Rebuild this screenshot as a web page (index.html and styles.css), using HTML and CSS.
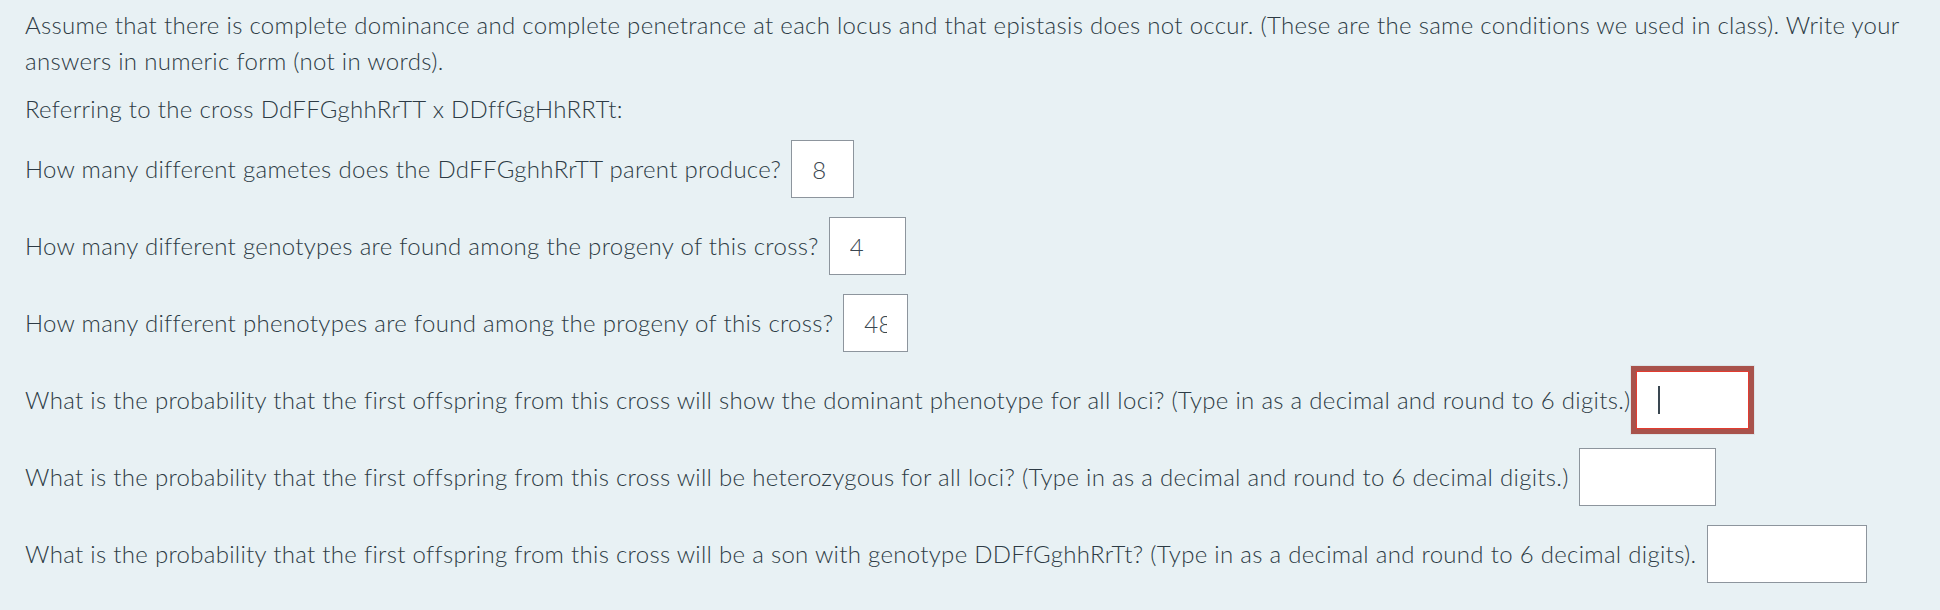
FILE: index.html
```html
<!DOCTYPE html>
<html lang="en">
<head>
<meta charset="utf-8">
<title>Quiz question</title>
<link rel="stylesheet" href="styles.css">
</head>
<body>
<div class="question">
  <p class="intro">Assume that there is complete dominance and complete penetrance at each locus and that epistasis does not occur. (These are the same conditions we used in class). Write your answers in numeric form (not in words).</p>
  <p class="intro">Referring to the cross DdFFGghhRrTT x DDffGgHhRRTt:</p>
  <div class="row"><span class="label">How many different gametes does the DdFFGghhRrTT parent produce?</span><input class="answer w-a" type="text" value="8"></div>
  <div class="row"><span class="label">How many different genotypes are found among the progeny of this cross?</span><input class="answer w-b" type="text" value="4"></div>
  <div class="row"><span class="label">How many different phenotypes are found among the progeny of this cross?</span><input class="answer w-c" type="text" value="48"></div>
  <div class="row"><span class="label">What is the probability that the first offspring from this cross will show the dominant phenotype for all loci? (Type in as a decimal and round to 6 digits.)</span><span class="focus-wrap"><input class="answer w-d focused" type="text" value=""><span class="caret"></span></span></div>
  <div class="row"><span class="label">What is the probability that the first offspring from this cross will be heterozygous for all loci? (Type in as a decimal and round to 6 decimal digits.)</span><input class="answer w-e" type="text" value=""></div>
  <div class="row"><span class="label">What is the probability that the first offspring from this cross will be a son with genotype DDFfGghhRrTt? (Type in as a decimal and round to 6 decimal digits).</span><input class="answer w-f" type="text" value=""></div>
</div>
</body>
</html>
```

FILE: styles.css
```css
html, body {
  margin: 0;
  padding: 0;
  background: #e8f1f4;
}

body {
  font-family: Lato, "Liberation Sans", sans-serif;
  font-weight: 300;
  font-size: 24px;
  line-height: 36px;
  letter-spacing: 0.3px;
  font-variant-ligatures: none;
  color: #2d3b45;
}

.question {
  padding: 7px 15px 0 25px;
}

.intro {
  margin: 0 0 12px 0;
}

.row {
  display: flex;
  align-items: center;
  height: 58px;
  margin-top: 19px;
}

.intro + .row {
  margin-top: 13px;
}

.answer {
  box-sizing: border-box;
  height: 58px;
  margin: 0 0 0 10px;
  padding: 0 20px;
  border: 1px solid #8d959d;
  border-radius: 0;
  background: #ffffff;
  font-family: Lato, "Liberation Sans", sans-serif;
  font-weight: 300;
  font-size: 24px;
  letter-spacing: 0.3px;
  color: #3a4751;
  outline: none;
}

.w-a { width: 63px; }
.w-b { width: 77px; }
.w-c { width: 65px; }
.w-d { width: 113px; }
.w-e { width: 137px; }
.w-f { width: 160px; }

.focus-wrap {
  position: relative;
  display: inline-flex;
  margin-left: 5px;
}

.focus-wrap .answer {
  margin-left: 0;
}

.focused {
  border-color: #e33b30;
  box-shadow: 0 0 0 5px #a8524b, 0 0 0 6px #dde4e7;
}

.caret {
  position: absolute;
  left: 22px;
  top: 15px;
  width: 2px;
  height: 28px;
  background: #3a4751;
}
```
